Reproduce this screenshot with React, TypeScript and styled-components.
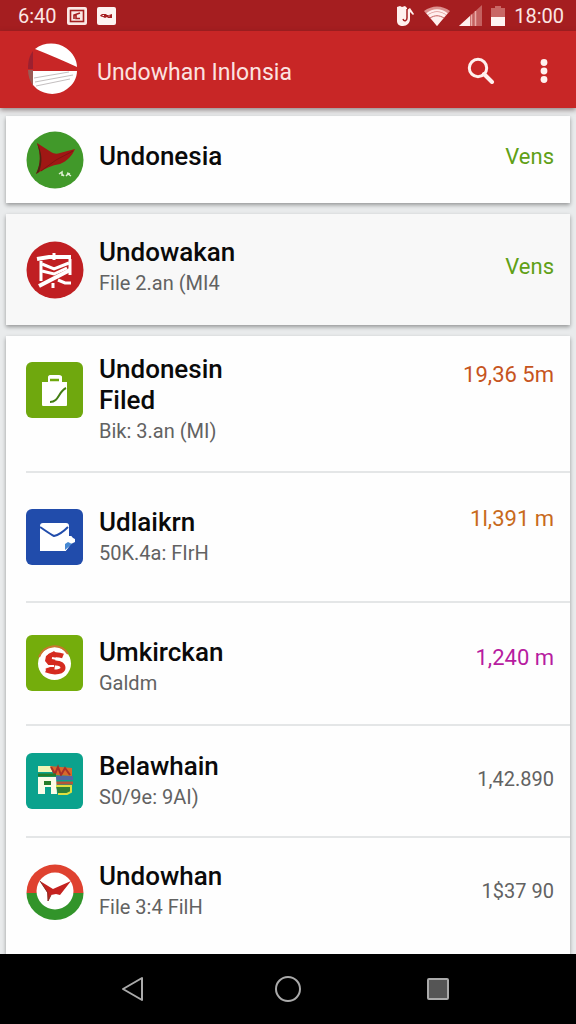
import React from 'react';
import styled, { createGlobalStyle } from 'styled-components';

const GlobalStyle = createGlobalStyle`
  *, *::before, *::after { box-sizing: border-box; }
  body {
    margin: 0;
    background: #e9ebec;
    font-family: Roboto, 'Liberation Sans', sans-serif;
  }
`;

const Screen = styled.div`
  display: flex;
  flex-direction: column;
  min-height: 100vh;
`;

const StatusBar = styled.div`
  display: flex;
  align-items: center;
  justify-content: space-between;
  height: 31px;
  padding: 0 12px 0 18px;
  background: #a51e20;
  color: #fbe6e4;
  font-size: 20px;
  line-height: 30px;
`;

const StatusGroup = styled.div<{ $gap: number }>`
  display: flex;
  align-items: center;
  gap: ${(p) => p.$gap}px;
`;

const Clock = styled.time`
  white-space: nowrap;
`;

const AppBar = styled.header`
  position: relative;
  display: flex;
  align-items: center;
  height: 77px;
  padding: 0 16px 0 26px;
  background: #c82626;
  box-shadow: 0 2px 5px rgba(60, 30, 30, 0.5);

  svg { display: block; }
`;

const AppTitle = styled.h1`
  flex: 1;
  margin: 0 0 0 18px;
  padding-top: 6px;
  color: #fbe3e1;
  font-size: 23px;
  font-weight: 400;
  line-height: 30px;
  white-space: nowrap;
`;

const IconButton = styled.button<{ $width: number }>`
  display: flex;
  align-items: center;
  justify-content: center;
  width: ${(p) => p.$width}px;
  height: 48px;
  padding: 0;
  border: 0;
  background: none;
  cursor: pointer;
`;

const List = styled.main`
  display: flex;
  flex: 1;
  flex-direction: column;
  gap: 11px;
  padding: 8px 6px 0;
`;

const Card = styled.section<{ $shade?: string; $fill?: boolean }>`
  flex: ${(p) => (p.$fill ? '1 0 auto' : 'none')};
  background: ${(p) => p.$shade ?? '#fefefe'};
  box-shadow: 0 2px 4px rgba(0, 0, 0, 0.36);
`;

const Row = styled.div<{ $height: number; $top?: boolean }>`
  display: flex;
  align-items: ${(p) => (p.$top ? 'flex-start' : 'center')};
  min-height: ${(p) => p.$height}px;
  padding: ${(p) => (p.$top ? '18px' : '0')} 16px 0 20px;
`;

const Divider = styled.hr`
  height: 2px;
  margin: -1px 0 -1px 20px;
  border: 0;
  background: #e4e6e7;
`;

const IconSlot = styled.div<{ $top?: boolean }>`
  flex: none;
  width: 73px;
  padding-top: ${(p) => (p.$top ? '8px' : '0')};

  svg { display: block; }
`;

const Labels = styled.div<{ $raise?: number; $drop?: number }>`
  flex: 1;
  min-width: 0;
  padding-top: ${(p) => p.$drop ?? 0}px;
  padding-bottom: ${(p) => p.$raise ?? 0}px;
`;

const Name = styled.h2`
  max-width: 200px;
  margin: 0;
  color: #0a0a0a;
  font-size: 26px;
  font-weight: 500;
  line-height: 31px;
`;

const Detail = styled.p`
  margin: 0;
  color: #626262;
  font-size: 20px;
  line-height: 30px;
  white-space: nowrap;
`;

const Amount = styled.span<{ $color: string; $small?: boolean; $raise?: number }>`
  align-self: center;
  padding-bottom: ${(p) => p.$raise ?? 0}px;
  color: ${(p) => p.$color};
  font-size: ${(p) => (p.$small ? 20 : 22)}px;
  line-height: 30px;
  white-space: nowrap;
`;

const NavBar = styled.nav`
  display: flex;
  align-items: center;
  justify-content: center;
  height: 70px;
  background: #000;
`;

const NavButton = styled.button`
  display: flex;
  align-items: center;
  justify-content: center;
  width: 26%;
  height: 48px;
  padding: 0;
  border: 0;
  background: none;
  cursor: pointer;
`;

const Logo = () => (
  <svg width="53" height="53" viewBox="0 0 53 53" aria-hidden="true">
    <path d="M9 6C18-1 31-1 40 5c7 5 11 12 11 19C38 18 24 12 9 6z" fill="#fff" />
    <path d="M7 8v18H2C2 19 3 13 7 8z" fill="#9c2030" />
    <path d="M2 27h5v16C4 38 2 33 2 27z" fill="#9a5a55" />
    <path d="M7 28h44c0 7-4 14-10 18-9 7-22 6-30 0l-4-4z" fill="#fff" />
    <path d="M8 35l35-6M9 39l38-7M10 43l34-7" stroke="#c4bfc0" strokeWidth="1" />
  </svg>
);

const SearchIcon = () => (
  <svg width="28" height="28" viewBox="0 0 28 28" aria-hidden="true">
    <circle cx="11" cy="12" r="8.7" fill="none" stroke="#fff0ee" strokeWidth="3" />
    <path d="M17 18l8 8" stroke="#fff0ee" strokeWidth="4" strokeLinecap="round" />
  </svg>
);

const MoreIcon = () => (
  <svg width="8" height="28" viewBox="0 0 8 28" fill="#fff0ee" aria-hidden="true">
    <circle cx="4" cy="6.5" r="3.4" />
    <circle cx="4" cy="15" r="3.4" />
    <circle cx="4" cy="23.5" r="3.4" />
  </svg>
);

const FrameIcon = () => (
  <svg width="20" height="18" viewBox="0 0 20 18" aria-hidden="true">
    <rect width="20" height="18" rx="2" fill="#fbe8e6" />
    <rect x="3.5" y="3.5" width="13" height="11" fill="#fbe8e6" stroke="#a51e20" strokeWidth="1.6" />
    <path d="M7 12V8l6-2M9 8v3.500h4" fill="none" stroke="#a51e20" strokeWidth="1.6" />
  </svg>
);

const MessageIcon = () => (
  <svg width="19" height="18" viewBox="0 0 19 18" aria-hidden="true">
    <rect width="19" height="18" rx="2" fill="#fdf3f1" />
    <path d="M3 8.500l2-1.500h4l1 1h2l3-1v4h-4l-1-1-2 1-2-1-2-.5z" fill="#a51e20" />
    <path d="M5.500 8.500h1.500M11.500 9h1" stroke="#fdf3f1" />
  </svg>
);

const HandIcon = () => (
  <svg width="19" height="20" viewBox="0 0 19 20" aria-hidden="true">
    <path d="M1 1l3-1 2 1 3-1 2 2v2l3-2 4 6-1 1-3-3v7c0 4-3 7-7 7-4 0-6-2-6-5z" fill="#fff0ee" />
    <path d="M7 13c1 3 4 2 4-1V3" fill="none" stroke="#a51e20" strokeWidth="1.5" />
  </svg>
);

const WifiIcon = () => (
  <svg width="26" height="20" viewBox="0 0 26 20" aria-hidden="true">
    <path d="M0 5C8-1 18-1 26 5L13 20z" fill="#dc918f" />
    <path d="M4 9c6-4 12-4 18 0l-9 11z" fill="#fff0ee" />
    <path d="M3 8c6-5 14-5 20 0" fill="none" stroke="#fff0ee" strokeWidth="2" />
    <path d="M6 12c5-3 9-3 14 0" fill="none" stroke="#c4605f" strokeWidth="1" />
  </svg>
);

const SignalIcon = () => (
  <svg width="23" height="21" viewBox="0 0 23 21" aria-hidden="true">
    <path d="M23 0v21H0z" fill="#c4605f" />
    <path d="M11 11v10H0z" fill="#fff0ee" />
    <path d="M12.500 9.500v11.500M16.500 6v15" stroke="#e9aaa7" strokeWidth="1.5" />
  </svg>
);

const BatteryIcon = () => (
  <svg width="14" height="20" viewBox="0 0 14 20" aria-hidden="true">
    <path d="M0 2h4V0h6v2h4v9H0z" fill="#c96765" />
    <path d="M0 11h14v9H0z" fill="#fff4f2" />
  </svg>
);

const BirdIcon = () => (
  <svg width="58" height="58" viewBox="0 0 58 58" aria-hidden="true">
    <circle cx="29" cy="29" r="28.500" fill="#41992a" />
    <path d="M11 12l14 9c3 2 6 2 9 1l15-4c-3 7-8 12-15 15-8 1-16 5-24 10 5-11 5-19 1-31z" fill="#a01714" />
    <path d="M11 12c5 9 6 19 2 29l-3 2c5-11 5-19 1-31z" fill="#4c2412" />
    <path d="M15 40l15-11 17-9" fill="none" stroke="#801410" strokeWidth="1" />
    <path d="M33 43l3-2v4M36 43l2 2M40 45l2-2 3 2M41 42l3 1" fill="none" stroke="#dcefd2" strokeWidth="1.5" />
  </svg>
);

const BannerIcon = () => (
  <svg width="58" height="58" viewBox="0 0 58 58" aria-hidden="true">
    <circle cx="29" cy="29" r="28.500" fill="#c01f22" />
    <g fill="none" stroke="#fff" strokeWidth="3">
      <path d="M11 18l12-2h22" strokeWidth="4" />
      <path d="M28 12v7M15 20v20M44 18v16" />
      <path d="M16 23l12 5 15-6M16 30l12 3 13-6" />
      <path d="M13 45l31-16" strokeWidth="4" />
      <path d="M32 39l7 3h6M27 42v5" />
    </g>
  </svg>
);

const CaseIcon = () => (
  <svg width="57" height="57" viewBox="0 0 57 57" aria-hidden="true">
    <rect width="57" height="56" rx="6" fill="#6fa80e" />
    <path d="M22 21v-6c0-1 1-2 2-2h9c2 0 3 1 3 2v6z" fill="#fff" />
    <path d="M24 18h9" stroke="#6fa80e" strokeWidth="2.5" />
    <path d="M16 20h25v23c0 1-1 1-2 1H17c-1 0-1-1-1-2z" fill="#fff" />
    <path d="M24 40c9 0 8-10 16-14" fill="none" stroke="#427d13" strokeWidth="2" />
  </svg>
);

const MailIcon = () => (
  <svg width="57" height="57" viewBox="0 0 57 57" aria-hidden="true">
    <rect width="57" height="56" rx="6" fill="#214cab" />
    <path d="M14 17c0-2 1-3 3-3h23c2 0 3 1 3 3v10h2c1 0 1 2 4 3v3l-4 2-5 7H14z" fill="#fff" />
    <path d="M14 18c6 4 10 7 14 9 5-1 9-4 14-9" fill="none" stroke="#214cab" strokeWidth="2" />
    <path d="M39 41v-6l3-2 4 2z" fill="#4688d2" />
    <path d="M40 42l6-7v7z" fill="#214cab" />
  </svg>
);

const CoinIcon = () => (
  <svg width="57" height="57" viewBox="0 0 57 57" aria-hidden="true">
    <rect width="57" height="56" rx="6" fill="#74ad0c" />
    <circle cx="28.500" cy="28.500" r="16.500" fill="#fff" />
    <path d="M13 22C18 10 34 7 42 19" fill="none" stroke="#ca7530" strokeWidth="2" />
    <path d="M37 21c-5-2-14-2-14 2s3 5 7 5 7 2 7 5-7 6-17 2" fill="none" stroke="#d52b20" strokeWidth="5" />
    <path d="M20 21l8-5 2 2-2 21-9-5 5-2-5-6z" fill="#d52b20" />
    <path d="M26 23l10 2M19 31h9" stroke="#fff" strokeWidth="2" />
  </svg>
);

const StallIcon = () => (
  <svg width="57" height="57" viewBox="0 0 57 57" aria-hidden="true">
    <rect width="57" height="56" rx="6" fill="#0ba28d" />
    <rect x="12" y="13" width="14" height="6" fill="#f2f5b4" />
    <path d="M24 13l22 2v8l-18-1z" fill="#d8692b" />
    <path d="M25 14l4 7 3-7 3 8 4-7 5 7" fill="none" stroke="#a6302a" strokeWidth="2" />
    <path d="M12 22h18" stroke="#267c29" strokeWidth="3" />
    <path d="M30 25h17" stroke="#5268a3" strokeWidth="4" />
    <path d="M30 30h17" stroke="#b55639" strokeWidth="3" />
    <path d="M12 24h18l1 17h-6v-7h-6v7h-7z" fill="#fbfce8" />
    <path d="M18 28h7v4h-7z" fill="#267c29" />
    <path d="M30 33h15v6l-4 2h-9" fill="#318037" stroke="#e0df3e" strokeWidth="2" />
  </svg>
);

const RingIcon = () => (
  <svg width="58" height="58" viewBox="0 0 58 58" aria-hidden="true">
    <path d="M.5 31a28.500 28.500 0 1 1 57 0z" fill="#df4230" />
    <path d="M.5 31h57a28.500 27 0 0 1-57 0z" fill="#32942a" />
    <circle cx="29" cy="29" r="18.500" fill="#fff" />
    <path d="M14 19l13 8 18-8-11 14-4-1-5 1-3 6-1-9z" fill="#c5221f" />
    <path d="M14 19l8 12v8l3-6" fill="none" stroke="#833129" strokeWidth="1" />
  </svg>
);

const GREEN = '#60a016';
const GREY = '#626262';

type Entry = {
  icon: React.ReactNode;
  name: string;
  detail: string;
  amount: string;
  color: string;
  height: number;
  small?: boolean;
  raise?: number;
  drop?: number;
};

const entries: Entry[] = [
  { icon: <MailIcon />, name: 'Udlaikrn', detail: '50K.4a: FIrH', amount: '1l,391 m', color: '#c86a1c', height: 130, raise: 36 },
  { icon: <CoinIcon />, name: 'Umkirckan', detail: 'Galdm', amount: '1,240 m', color: '#b71ca0', height: 123, raise: 12, drop: 8 },
  { icon: <StallIcon />, name: 'Belawhain', detail: 'S0/9e: 9AI)', amount: '1,42.890', color: GREY, height: 112, small: true, raise: 4 },
  { icon: <RingIcon />, name: 'Undowhan', detail: 'File 3:4 FilH', amount: '1$37 90', color: GREY, height: 108, small: true },
];

export default function App() {
  return (
    <Screen>
      <GlobalStyle />
      <StatusBar>
        <StatusGroup $gap={10}>
          <Clock>6:40</Clock>
          <FrameIcon />
          <MessageIcon />
        </StatusGroup>
        <StatusGroup $gap={9}>
          <HandIcon />
          <WifiIcon />
          <SignalIcon />
          <BatteryIcon />
          <Clock>18:00</Clock>
        </StatusGroup>
      </StatusBar>
      <AppBar>
        <Logo />
        <AppTitle>Undowhan Inlonsia</AppTitle>
        <IconButton type="button" aria-label="Search" $width={94}>
          <SearchIcon />
        </IconButton>
        <IconButton type="button" aria-label="More options" $width={32}>
          <MoreIcon />
        </IconButton>
      </AppBar>
      <List>
        <Card>
          <Row $height={87}>
            <IconSlot><BirdIcon /></IconSlot>
            <Labels $raise={6}><Name>Undonesia</Name></Labels>
            <Amount $color={GREEN} $raise={6}>Vens</Amount>
          </Row>
        </Card>
        <Card $shade="#f8f8f8">
          <Row $height={111}>
            <IconSlot><BannerIcon /></IconSlot>
            <Labels $raise={4}>
              <Name>Undowakan</Name>
              <Detail>File 2.an (MI4</Detail>
            </Labels>
            <Amount $color={GREEN} $raise={6}>Vens</Amount>
          </Row>
        </Card>
        <Card $fill>
          <Row $height={136} $top>
            <IconSlot $top><CaseIcon /></IconSlot>
            <Labels>
              <Name>Undonesin<br />Filed</Name>
              <Detail>Bik: 3.an (MI)</Detail>
            </Labels>
            <Amount $color="#c65420" $raise={76}>19,36 5m</Amount>
          </Row>
          {entries.map((entry) => (
            <React.Fragment key={entry.name}>
              <Divider />
              <Row $height={entry.height}>
                <IconSlot>{entry.icon}</IconSlot>
                <Labels $drop={entry.drop}>
                  <Name>{entry.name}</Name>
                  <Detail>{entry.detail}</Detail>
                </Labels>
                <Amount $color={entry.color} $small={entry.small} $raise={entry.raise}>
                  {entry.amount}
                </Amount>
              </Row>
            </React.Fragment>
          ))}
        </Card>
      </List>
      <NavBar>
        <NavButton type="button" aria-label="Back">
          <svg width="32" height="28" viewBox="0 0 32 28" aria-hidden="true">
            <path d="M20 3v22L1 14z" fill="none" stroke="#aaa" strokeWidth="2" strokeLinejoin="round" />
          </svg>
        </NavButton>
        <NavButton type="button" aria-label="Home">
          <svg width="28" height="28" viewBox="0 0 28 28" aria-hidden="true">
            <circle cx="14" cy="14" r="12" fill="none" stroke="#aaa" strokeWidth="2" />
          </svg>
        </NavButton>
        <NavButton type="button" aria-label="Recent apps">
          <svg width="24" height="24" viewBox="0 0 24 24" aria-hidden="true">
            <rect x="2" y="2" width="20" height="20" rx="1" fill="#555" stroke="#aaa" strokeWidth="2" />
          </svg>
        </NavButton>
      </NavBar>
    </Screen>
  );
}
